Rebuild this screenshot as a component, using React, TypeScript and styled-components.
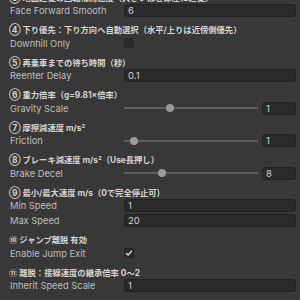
import React from "react"
import styled, { createGlobalStyle } from "styled-components"

const GlobalStyle = createGlobalStyle`
  html, body {
    margin: 0;
    background: #383838;
  }
`

const Inspector = styled.div`
  width: 300px;
  height: 300px;
  overflow: hidden;
  background: #383838;
  font-family: "Inter", "Noto Sans CJK JP", sans-serif;
  color: #c4c4c4;
`

const Scroll = styled.div`
  margin-top: -14.5px;
`

const Header = styled.div`
  height: 17.5px;
  box-sizing: border-box;
  padding: 6px 0 0 9px;
  font-size: 8.3px;
  line-height: 12px;
  font-weight: 700;
  color: #d4d4d4;
  white-space: nowrap;
`

const Row = styled.div`
  height: 15px;
  display: grid;
  grid-template-columns: 114px 1fr;
  align-items: center;
  padding: 0 4px 0 10px;
`

const Label = styled.span`
  font-size: 9.3px;
  color: #bdbdbd;
  white-space: nowrap;
`

const Field = styled.div<{ $w?: number }>`
  height: 13px;
  box-sizing: border-box;
  width: ${(p) => (p.$w ? `${p.$w}px` : "auto")};
  background: #2a2a2a;
  border: 1px solid #212121;
  border-radius: 3px;
  padding-left: 3px;
  font-size: 9.5px;
  line-height: 11px;
  color: #d2d2d2;
`

const SliderWrap = styled.div`
  display: flex;
  align-items: center;
  gap: 4px;
`

const Track = styled.div`
  position: relative;
  flex: 1;
  height: 2px;
  background: #5e5e5e;
`

const Thumb = styled.div`
  position: absolute;
  top: -3px;
  width: 8px;
  height: 8px;
  margin-left: -4px;
  border-radius: 50%;
  background: #9a9a9a;
`

const Check = styled.div`
  width: 10px;
  height: 10px;
  box-sizing: border-box;
  background: #2c2c2c;
  border: 1px solid #232323;
  border-radius: 2px;
  display: flex;
  align-items: center;
  justify-content: center;
`

type Item =
  | { kind: "header"; text: string }
  | { kind: "field"; label: string; value: string }
  | { kind: "check"; label: string; on: boolean }
  | { kind: "slider"; label: string; value: string; pos: number }

const items: Item[] = [
  { kind: "header", text: "③ 地面追従の回転補間速度（大きいほど即座に追従）" },
  { kind: "field", label: "Face Forward Smooth", value: "6" },
  { kind: "header", text: "④ 下り優先：下り方向へ自動選択（水平/上りは近傍側優先）" },
  { kind: "check", label: "Downhill Only", on: false },
  { kind: "header", text: "⑤ 再乗車までの待ち時間（秒）" },
  { kind: "field", label: "Reenter Delay", value: "0.1" },
  { kind: "header", text: "⑥ 重力倍率（g=9.81×倍率）" },
  { kind: "slider", label: "Gravity Scale", value: "1", pos: 0.345 },
  { kind: "header", text: "⑦ 摩擦減速度 m/s²" },
  { kind: "slider", label: "Friction", value: "1", pos: 0.075 },
  { kind: "header", text: "⑧ ブレーキ減速度 m/s²（Use長押し）" },
  { kind: "slider", label: "Brake Decel", value: "8", pos: 0.285 },
  { kind: "header", text: "⑨ 最小/最大速度 m/s（0で完全停止可）" },
  { kind: "field", label: "Min Speed", value: "1" },
  { kind: "field", label: "Max Speed", value: "20" },
  { kind: "header", text: "⑩ ジャンプ離脱 有効" },
  { kind: "check", label: "Enable Jump Exit", on: true },
  { kind: "header", text: "⑪ 離脱：接線速度の継承倍率 0〜2" },
  { kind: "field", label: "Inherit Speed Scale", value: "1" },
]

const CheckMark = () => (
  <svg width="8" height="8" viewBox="0 0 8 8">
    <path d="M1.2 4.3 L3.1 6.1 L6.9 1.8" fill="none" stroke="#e0e0e0" strokeWidth="1.4" />
  </svg>
)

export default function App() {
  return (
    <Inspector>
      <GlobalStyle />
      <Scroll>
        {items.map((it, i) => {
          if (it.kind === "header") return <Header key={i}>{it.text}</Header>
          if (it.kind === "field")
            return (
              <Row key={i}>
                <Label>{it.label}</Label>
                <Field>{it.value}</Field>
              </Row>
            )
          if (it.kind === "check")
            return (
              <Row key={i}>
                <Label>{it.label}</Label>
                <Check>{it.on && <CheckMark />}</Check>
              </Row>
            )
          return (
            <Row key={i}>
              <Label>{it.label}</Label>
              <SliderWrap>
                <Track>
                  <Thumb style={{ left: `${it.pos * 100}%` }} />
                </Track>
                <Field $w={34}>{it.value}</Field>
              </SliderWrap>
            </Row>
          )
        })}
      </Scroll>
    </Inspector>
  )
}
